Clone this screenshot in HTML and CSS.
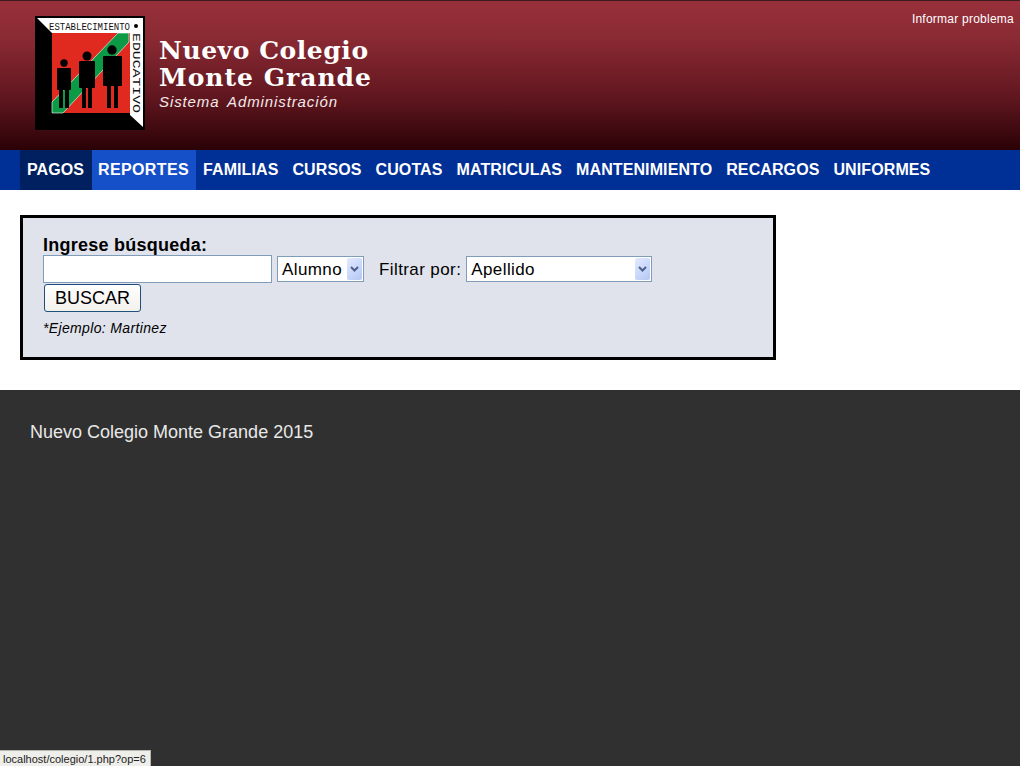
FILE: index.html
```html
<!DOCTYPE html>
<html lang="en">

<head>
    <meta charset="UTF-8">
    <title>Nuevo Colegio Monte Grande</title>
    <link rel="stylesheet" href="styles.css">
</head>

<body>

    <div class="header">
        <svg class="logo" width="110" height="114" viewBox="0 0 110 114">
            <rect width="110" height="114" fill="#000"></rect>
            <polygon points="2,2 108,2 108,111 95,99 95,17 17,17" fill="#fff"></polygon>
            <rect x="17" y="17" width="78" height="80" fill="#e0291f"></rect>
            <polygon points="17,86 83,17 94,17 94,26 28,97 17,97" fill="#0d9a47" stroke="#fff" stroke-width="0.6"></polygon>
            <text class="logo_top" x="14" y="14" textLength="81" lengthAdjust="spacingAndGlyphs">ESTABLECIMIENTO</text>
            <circle cx="101" cy="10" r="2" fill="#000"></circle>
            <text class="logo_side" transform="translate(98,17) rotate(90)" textLength="80" lengthAdjust="spacingAndGlyphs">EDUCATIVO</text>
            <g fill="#000">
                <circle cx="29" cy="47" r="3.700"></circle>
                <rect x="22" y="52" width="14" height="22" rx="1"></rect>
                <rect x="24" y="74" width="4" height="18"></rect>
                <rect x="30" y="74" width="4" height="18"></rect>
                <circle cx="52" cy="40" r="4.500"></circle>
                <rect x="44" y="45" width="16" height="27" rx="1"></rect>
                <rect x="47" y="72" width="4" height="20"></rect>
                <rect x="53" y="72" width="4" height="20"></rect>
                <circle cx="77" cy="34" r="4.700"></circle>
                <rect x="68" y="40" width="19" height="30" rx="1"></rect>
                <rect x="72" y="70" width="4" height="22"></rect>
                <rect x="79" y="70" width="4" height="22"></rect>
            </g>
        </svg>
        <div class="brand">
            <div class="brand_name">Nuevo Colegio</div>
            <div class="brand_name wide">Monte Grande</div>
            <div class="brand_sub">Sistema Administración</div>
        </div>
        <a class="report" href="#">Informar problema</a>
    </div>

    <div class="nav">
        <a class="nav_item active" href="#">PAGOS</a>
        <a class="nav_item hover" href="#">REPORTES</a>
        <a class="nav_item" href="#">FAMILIAS</a>
        <a class="nav_item" href="#">CURSOS</a>
        <a class="nav_item" href="#">CUOTAS</a>
        <a class="nav_item" href="#">MATRICULAS</a>
        <a class="nav_item" href="#">MANTENIMIENTO</a>
        <a class="nav_item" href="#">RECARGOS</a>
        <a class="nav_item" href="#">UNIFORMES</a>
    </div>

    <div class="content">
        <div class="search_box">
            <div class="search_title">Ingrese búsqueda:</div>
            <div class="search_row">
                <input class="search_input" type="text">
                <div class="select select_type">
                    <span>Alumno</span>
                    <i class="arrow"><svg width="9" height="6" viewBox="0 0 9 6"><path d="M1 1L4.500 4.500L8 1" fill="none" stroke="#4d5f8c" stroke-width="2"></path></svg></i>
                </div>
                <label class="filter_label">Filtrar por:</label>
                <div class="select select_filter">
                    <span>Apellido</span>
                    <i class="arrow"><svg width="9" height="6" viewBox="0 0 9 6"><path d="M1 1L4.500 4.500L8 1" fill="none" stroke="#4d5f8c" stroke-width="2"></path></svg></i>
                </div>
            </div>
            <button class="search_btn">BUSCAR</button>
            <div class="search_hint">*Ejemplo: Martinez</div>
        </div>
    </div>

    <div class="footer">Nuevo Colegio Monte Grande 2015</div>

    <div class="status_bar">localhost/colegio/1.php?op=6</div>

</body>

</html>
```

FILE: styles.css
```css
* {
    margin: 0;
    padding: 0;
    box-sizing: border-box;
}

html,
body {
    height: 100%;
    overflow: hidden;
}

body {
    position: relative;
    display: flex;
    flex-direction: column;
    font-family: "Liberation Sans", Arial, sans-serif;
    background: #303030;
}

.header {
    position: relative;
    display: flex;
    flex: none;
    align-items: flex-start;
    height: 150px;
    padding: 15px 0 0 35px;
    border-top: 1px solid #3a1a1e;
    background: linear-gradient(#98303a 0%, #8a2a33 25%, #60161f 65%, #2a0206 100%);
}

.logo {
    flex: none;
}

.brand {
    margin: 20px 0 0 14px;
    color: #fff;
}

.brand_name {
    font-family: "DejaVu Serif", serif;
    font-weight: bold;
    font-size: 25px;
    line-height: 29px;
    height: 27px;
    letter-spacing: 0.55px;
}

.wide {
    letter-spacing: 1px;
}

.brand_sub {
    margin-top: 3px;
    font-size: 15px;
    font-style: italic;
    letter-spacing: 0.9px;
    word-spacing: 3px;
    color: #f4e8e8;
}

.report {
    position: absolute;
    top: 11px;
    right: 6px;
    font-size: 12px;
    letter-spacing: 0.24px;
    color: #fff;
    text-decoration: none;
}

.nav {
    display: flex;
    flex: none;
    height: 40px;
    padding-left: 20px;
    background: #002f96;
}

.nav_item {
    padding: 0 7px;
    font-size: 16px;
    font-weight: bold;
    letter-spacing: 0.1px;
    line-height: 39px;
    color: #fff;
    text-decoration: none;
}

.active {
    width: 72px;
    background: #012060;
}

.hover {
    width: 104px;
    padding: 0 0 0 6px;
    letter-spacing: 0.375px;
    background: #1650c8;
}

.content {
    flex: none;
    height: 200px;
    padding: 25px 0 0 20px;
    background: #fff;
}

.search_box {
    width: 756px;
    height: 145px;
    padding: 17px 20px 0;
    border: 3px solid #000;
    background: #e0e3ec;
    color: #000;
}

.search_title {
    font-size: 18px;
    font-weight: bold;
    letter-spacing: 0.25px;
    line-height: 20px;
}

.search_row {
    display: flex;
    align-items: center;
    height: 28px;
    font-size: 17px;
    letter-spacing: 0.4px;
}

.search_input {
    width: 229px;
    height: 28px;
    border: 1px solid #7f9db9;
    background: #fff;
}

.select {
    display: flex;
    align-items: center;
    justify-content: space-between;
    height: 26px;
    padding: 0 1px 0 4px;
    border: 1px solid #7f9db9;
    background: #fff;
}

.select span,
.filter_label {
    margin-top: 2px;
}

.select_type {
    width: 87px;
    margin-left: 5px;
}

.select_filter {
    width: 186px;
    margin-left: 5px;
}

.arrow {
    display: flex;
    align-items: center;
    justify-content: center;
    width: 15px;
    height: 22px;
    border-radius: 2px;
    background: linear-gradient(135deg, #e2eafe, #b4c7f5);
}

.filter_label {
    margin-left: 15px;
}

.search_btn {
    display: block;
    width: 97px;
    height: 28px;
    margin: 1px 0 0 1px;
    border: 1px solid #1e4f7d;
    border-radius: 3px;
    background: linear-gradient(#fff, #f2f1ea);
    font-family: "Liberation Sans", Arial, sans-serif;
    font-size: 18px;
    color: #000;
}

.search_hint {
    margin-top: 8px;
    font-size: 14px;
    font-style: italic;
    letter-spacing: 0.35px;
}

.footer {
    flex: 1;
    padding: 32px 30px 0;
    font-size: 18px;
    line-height: 20px;
    color: #e8e8e8;
}

.status_bar {
    position: absolute;
    left: 0;
    bottom: 0;
    width: 151px;
    height: 16px;
    padding-left: 3px;
    border-top: 1px solid #b8b8b0;
    border-right: 1px solid #b8b8b0;
    background: #eeeeea;
    font-size: 11px;
    line-height: 16px;
    color: #222;
    white-space: nowrap;
}

.logo_top,
.logo_side {
    font-family: "Liberation Mono", monospace;
    font-size: 10.500px;
    fill: #111;
}
```
